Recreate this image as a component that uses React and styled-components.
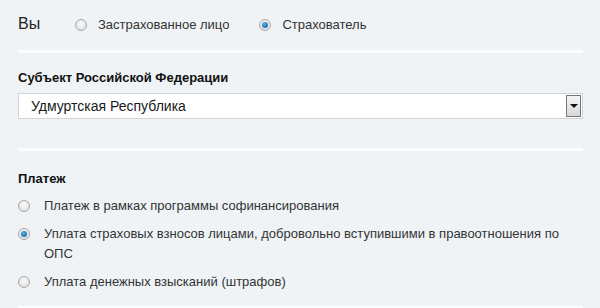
import React from "react";
import styled, { createGlobalStyle } from "styled-components";

const GlobalStyle = createGlobalStyle`
  body {
    margin: 0;
    background: #eff3f6;
    font-family: "Liberation Sans", Arial, sans-serif;
    color: #333;
  }
`;

const Page = styled.div`
  width: 600px;
  height: 308px;
  overflow: hidden;
  padding: 0 17px 0 18px;
  box-sizing: border-box;
`;

const Section = styled.section`
  border-bottom: 3px solid #fbfcfd;
  padding: ${props => props.pad || "0"};
`;

const WhoRow = styled.div`
  display: flex;
  align-items: center;
  height: 50px;
`;

const WhoLabel = styled.div`
  font-size: 16px;
  width: 57px;
  color: #222;
  margin-top: -3px;
`;

const Option = styled.label`
  display: flex;
  align-items: ${props => (props.top ? "flex-start" : "center")};
  font-size: 13px;
  line-height: 20px;
  color: #333;
  margin-right: ${props => props.gap || 0}px;
`;

const Radio = styled.span`
  flex: none;
  width: 12px;
  height: 12px;
  border-radius: 50%;
  box-sizing: border-box;
  border: 1px solid #a9a9a9;
  background: radial-gradient(circle at 50% 40%, #fdfdfd 0%, #e2e2e2 70%, #cfcfcf 100%);
  margin-right: ${props => props.space || 11}px;
  margin-top: ${props => props.shift || 0}px;
  display: flex;
  align-items: center;
  justify-content: center;
  &::after {
    content: "";
    display: ${props => (props.checked ? "block" : "none")};
    width: 6px;
    height: 6px;
    border-radius: 50%;
    background: radial-gradient(circle at 40% 35%, #5cb4ea 0%, #1a6fae 70%, #0d4a7a 100%);
  }
`;

const Title = styled.div`
  font-size: 13px;
  font-weight: bold;
  color: #111;
  margin-bottom: ${props => props.mb || 8}px;
`;

const Select = styled.div`
  display: flex;
  align-items: center;
  height: 26px;
  background: #fff;
  border: 1px solid #d4d4d4;
  box-sizing: border-box;
`;

const SelectText = styled.span`
  flex: 1;
  padding-left: 12px;
  font-size: 14px;
  color: #1a1a1a;
`;

const SelectButton = styled.span`
  width: 15px;
  height: 22px;
  margin-right: 1px;
  box-sizing: border-box;
  border: 1px solid #777;
  background: linear-gradient(#f5f5f5, #d8d8d8);
  display: flex;
  align-items: center;
  justify-content: center;
  &::after {
    content: "";
    border-left: 4px solid transparent;
    border-right: 4px solid transparent;
    border-top: 4px solid #111;
  }
`;

const OptionList = styled.div`
  display: flex;
  flex-direction: column;
  gap: 8px;
`;

export default function App() {
  return (
    <>
      <GlobalStyle />
      <Page>
        <Section>
          <WhoRow>
            <WhoLabel>Вы</WhoLabel>
            <Option gap={30}>
              <Radio />
              Застрахованное лицо
            </Option>
            <Option>
              <Radio checked />
              Страхователь
            </Option>
          </WhoRow>
        </Section>
        <Section pad="17px 0 29px">
          <Title>Субъект Российской Федерации</Title>
          <Select>
            <SelectText>Удмуртская Республика</SelectText>
            <SelectButton />
          </Select>
        </Section>
        <Section pad="20px 0 14px">
          <Title mb={10}>Платеж</Title>
          <OptionList>
            <Option top>
              <Radio shift={4} space={14} />
              <span>Платеж в рамках программы софинансирования</span>
            </Option>
            <Option top>
              <Radio shift={4} space={14} checked />
              <span>
                Уплата страховых взносов лицами, добровольно вступившими в правоотношения по ОПС
              </span>
            </Option>
            <Option top>
              <Radio shift={4} space={14} />
              <span>Уплата денежных взысканий (штрафов)</span>
            </Option>
          </OptionList>
        </Section>
      </Page>
    </>
  );
}
